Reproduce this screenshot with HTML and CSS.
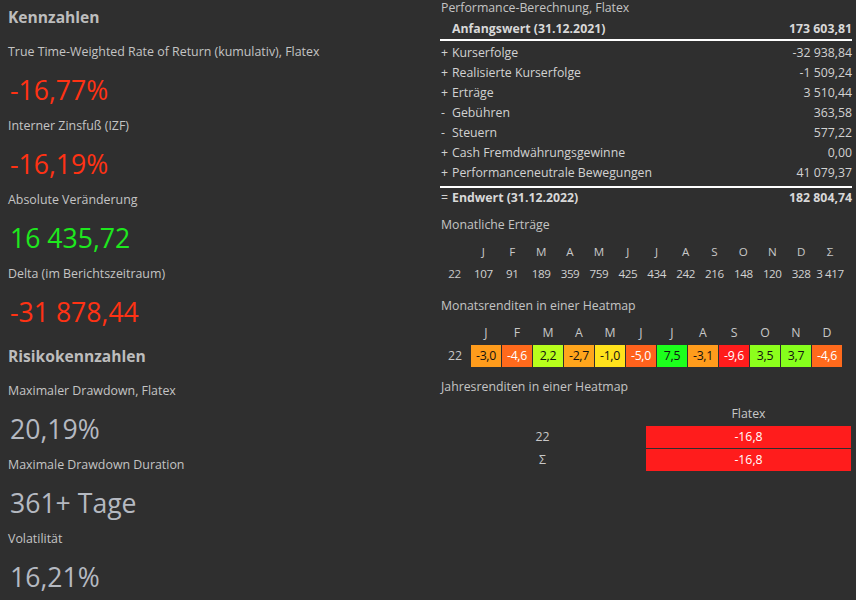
FILE: index.html
```html
<!DOCTYPE html>
<html lang="de">
<head>
<meta charset="utf-8">
<title>Kennzahlen</title>
<link rel="stylesheet" href="styles.css">
</head>
<body>
<div class="page">
  <section class="left">
    <h2 class="heading first">Kennzahlen</h2>
    <div class="label first-label">True Time-Weighted Rate of Return (kumulativ), Flatex</div>
    <div class="value neg">-16,77%</div>
    <div class="label">Interner Zinsfuß (IZF)</div>
    <div class="value neg">-16,19%</div>
    <div class="label">Absolute Veränderung</div>
    <div class="value pos">16 435,72</div>
    <div class="label">Delta (im Berichtszeitraum)</div>
    <div class="value neg">-31 878,44</div>
    <h2 class="heading second">Risikokennzahlen</h2>
    <div class="label first-label">Maximaler Drawdown, Flatex</div>
    <div class="value neutral">20,19%</div>
    <div class="label">Maximale Drawdown Duration</div>
    <div class="value neutral">361+ Tage</div>
    <div class="label">Volatilität</div>
    <div class="value neutral">16,21%</div>
  </section>

  <section class="right">
    <div class="title">Performance-Berechnung, Flatex</div>
    <div class="perf">
      <div class="prow total start"><span class="name"><span class="sign"></span><b>Anfangswert (31.12.2021)</b></span><b>173 603,81</b></div>
      <div class="prow gap-top"><span class="name"><span class="sign">+</span>Kurserfolge</span><span>-32 938,84</span></div>
      <div class="prow"><span class="name"><span class="sign">+</span>Realisierte Kurserfolge</span><span>-1 509,24</span></div>
      <div class="prow"><span class="name"><span class="sign">+</span>Erträge</span><span>3 510,44</span></div>
      <div class="prow"><span class="name"><span class="sign">-</span>Gebühren</span><span>363,58</span></div>
      <div class="prow"><span class="name"><span class="sign">-</span>Steuern</span><span>577,22</span></div>
      <div class="prow"><span class="name"><span class="sign">+</span>Cash Fremdwährungsgewinne</span><span>0,00</span></div>
      <div class="prow last"><span class="name"><span class="sign">+</span>Performanceneutrale Bewegungen</span><span>41 079,37</span></div>
      <div class="prow total end"><span class="name"><span class="sign">=</span><b>Endwert (31.12.2022)</b></span><b>182 804,74</b></div>
    </div>

    <div class="title t-monthly">Monatliche Erträge</div>
    <div class="monthly head">
      <span></span><span>J</span><span>F</span><span>M</span><span>A</span><span>M</span><span>J</span><span>J</span><span>A</span><span>S</span><span>O</span><span>N</span><span>D</span><span>Σ</span>
    </div>
    <div class="monthly vals">
      <span class="yr">22</span><span>107</span><span>91</span><span>189</span><span>359</span><span>759</span><span>425</span><span>434</span><span>242</span><span>216</span><span>148</span><span>120</span><span>328</span><span>3 417</span>
    </div>

    <div class="title t-heat">Monatsrenditen in einer Heatmap</div>
    <div class="heat head">
      <span></span><span>J</span><span>F</span><span>M</span><span>A</span><span>M</span><span>J</span><span>J</span><span>A</span><span>S</span><span>O</span><span>N</span><span>D</span>
    </div>
    <div class="heat cells">
      <span class="yr">22</span>
      <span class="c c-or dark">-3,0</span>
      <span class="c c-or2 light">-4,6</span>
      <span class="c c-yg dark">2,2</span>
      <span class="c c-or3 dark">-2,7</span>
      <span class="c c-ye dark">-1,0</span>
      <span class="c c-or4 light">-5,0</span>
      <span class="c c-gr dark">7,5</span>
      <span class="c c-or dark">-3,1</span>
      <span class="c c-red light">-9,6</span>
      <span class="c c-lg dark">3,5</span>
      <span class="c c-lg2 dark">3,7</span>
      <span class="c c-or2 light">-4,6</span>
    </div>

    <div class="title t-year">Jahresrenditen in einer Heatmap</div>
    <div class="yearly">
      <span></span><span class="yh">Flatex</span>
      <span class="yl">22</span><span class="yc">-16,8</span>
      <span class="yl">Σ</span><span class="yc">-16,8</span>
    </div>
  </section>
</div>
</body>
</html>
```

FILE: styles.css
```css
* { box-sizing: border-box; }

html, body {
  margin: 0;
  padding: 0;
  background: #2f2f2f;
}

body {
  font-family: "Open Sans", "Noto Sans", "DejaVu Sans", sans-serif;
  color: #cccccc;
  font-size: 12.3px;
  width: 856px;
  height: 600px;
  overflow: hidden;
}

.page {
  display: grid;
  grid-template-columns: 440px 412px;
}

/* ---------- left column ---------- */
.left {
  padding: 5px 0 0 8px;
}

.heading {
  margin: 0;
  font-size: 15.6px;
  font-weight: 700;
  line-height: 24px;
  color: #bdbdbd;
}

.heading.second { margin-top: 16px; }

.label {
  line-height: 20px;
  font-size: 12.4px;
  color: #c4c4c4;
  white-space: nowrap;
}

.label.first-label { margin-top: 13px; }

.value {
  margin: 12px 0 10px 2px;
  line-height: 32px;
  font-size: 26.6px;
  white-space: nowrap;
}

.value.neg { color: #ff3214; }
.value.pos { color: #1ee81e; }
.value.neutral { color: #b5b9c1; }

/* ---------- right column ---------- */
.right {
  padding-top: 0;
  color: #d2d2d2;
}

.title {
  line-height: 16px;
  font-size: 12.3px;
  color: #c4c4c4;
  padding-left: 1px;
}

.perf { margin-top: 2px; }

.prow {
  display: flex;
  justify-content: space-between;
  line-height: 20px;
  height: 20px;
  white-space: nowrap;
}

.prow .name { display: flex; }

.prow .sign {
  display: inline-block;
  width: 12px;
  padding-left: 1px;
}

.prow b { font-weight: 700; color: #d8d8d8; }

.prow.start {
  height: 23px;
  line-height: 21px;
  border-bottom: 2px solid #ffffff;
}

.prow.gap-top { margin-top: 2px; }

.prow.last {
  height: 25px;
  line-height: 20px;
  border-bottom: 2px solid #ffffff;
  padding-bottom: 3px;
}

.t-monthly { margin-top: 9px; }

.monthly {
  display: grid;
  grid-template-columns: repeat(14, 28.9px);
  line-height: 20px;
  font-size: 11.6px;
  text-align: center;
  white-space: nowrap;
}

.monthly.head { margin-top: 9px; color: #c8c8c8; }
.monthly.vals { margin-top: 2px; letter-spacing: -0.4px; }

.t-heat { margin-top: 14px; }

.heat {
  display: grid;
  grid-template-columns: repeat(13, 30px);
  column-gap: 1px;
  text-align: center;
  font-size: 12.3px;
}

.heat.head { margin-top: 9px; line-height: 20px; color: #c8c8c8; }
.heat.cells { margin-top: 2px; height: 22px; line-height: 22px; }

.yr { color: #c8c8c8; }

.c { display: block; height: 22px; letter-spacing: -0.3px; }
.c.dark { color: #111111; }
.c.light { color: #ffffff; }

.c-or  { background: #ff9c1c; }
.c-or2 { background: #ff6a1c; }
.c-or3 { background: #ffa51c; }
.c-or4 { background: #ff621c; }
.c-yg  { background: #b8ff1c; }
.c-ye  { background: #ffe21c; }
.c-gr  { background: #1cff1c; }
.c-red { background: #ff1c1c; }
.c-lg  { background: #8cff1c; }
.c-lg2 { background: #86ff1c; }

.t-year { margin-top: 12px; }

.yearly {
  display: grid;
  grid-template-columns: 205px 205px;
  column-gap: 1px;
  row-gap: 1px;
  text-align: center;
  font-size: 12.3px;
  margin-top: 9px;
}

.yh { line-height: 20px; margin-bottom: 1px; color: #c8c8c8; }
.yl { line-height: 22px; color: #c8c8c8; }
.yc {
  line-height: 22px;
  height: 22px;
  background: #ff1c1c;
  color: #ffffff;
}
```
